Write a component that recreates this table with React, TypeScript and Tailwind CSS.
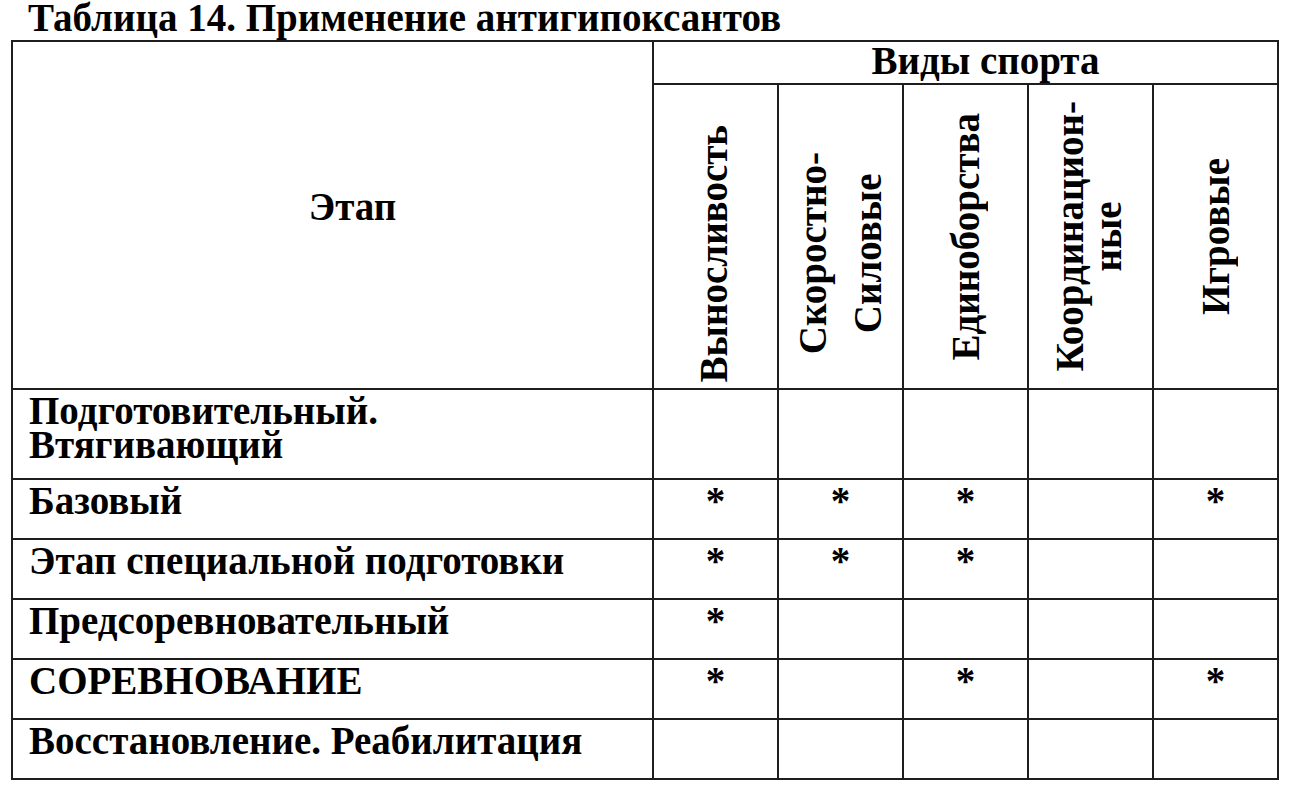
import React from "react";

const cols = ["a", "b", "c", "d", "e"];

const rows: { label: React.ReactNode; marks: boolean[]; h: string }[] = [
  { label: <>Подготовительный.<br />Втягивающий</>, marks: [false, false, false, false, false], h: "h-[90px]" },
  { label: "Базовый", marks: [true, true, true, false, true], h: "h-[60px]" },
  { label: "Этап специальной подготовки", marks: [true, true, true, false, false], h: "h-[60px]" },
  { label: "Предсоревновательный", marks: [true, false, false, false, false], h: "h-[60px]" },
  { label: "СОРЕВНОВАНИЕ", marks: [true, false, true, false, true], h: "h-[60px]" },
  { label: "Восстановление. Реабилитация", marks: [false, false, false, false, false], h: "h-[60px]" },
];

export default function App() {
  return (
    <div className="w-[1289px] h-[787px] bg-white text-black font-bold font-['Liberation_Serif','Times_New_Roman',serif] overflow-hidden">
      <h1 className="h-[40px] pl-[28px] text-[39px] leading-[36px] font-bold whitespace-nowrap">
        Таблица 14. Применение антигипоксантов
      </h1>
      <table className="ml-[11px] table-fixed border-collapse border-2 border-[#1e1e1e] w-[1266px]">
        <colgroup>
          <col className="w-[641px]" />
          {cols.map((c) => (
            <col key={c} className="w-[125px]" />
          ))}
        </colgroup>
        <tbody>
          <tr className="h-[43px]">
            <td rowSpan={2} className="border-2 border-[#1e1e1e] p-0 align-middle">
              <div className="flex h-[346px] items-center justify-center pl-[40px] pb-[18px] text-[39px] leading-[39px]">
                Этап
              </div>
            </td>
            <td colSpan={5} className="border-2 border-[#1e1e1e] p-0 align-middle">
              <div className="flex h-[41px] items-center justify-center pl-[40px] pb-[4px] text-[39px] leading-[39px] whitespace-nowrap">
                Виды спорта
              </div>
            </td>
          </tr>
          <tr className="h-[305px]">
            <td className="border-2 border-[#1e1e1e] p-0">
              <div className="flex h-[303px] items-center justify-center pt-[34px] pr-[4px] text-[39px] leading-[39px]">
                <span className="[writing-mode:vertical-rl] rotate-180 whitespace-nowrap">Выносливость</span>
              </div>
            </td>
            <td className="border-2 border-[#1e1e1e] p-0">
              <div className="flex h-[303px] items-center justify-center pt-[34px] pr-[2px] text-[39px] leading-[55px]">
                <span className="[writing-mode:vertical-rl] rotate-180 text-center whitespace-nowrap">Скоростно-<br />Силовые</span>
              </div>
            </td>
            <td className="border-2 border-[#1e1e1e] p-0">
              <div className="flex h-[303px] items-center justify-center text-[39px] leading-[39px]">
                <span className="[writing-mode:vertical-rl] rotate-180 whitespace-nowrap">Единоборства</span>
              </div>
            </td>
            <td className="border-2 border-[#1e1e1e] p-0">
              <div className="flex h-[303px] items-center justify-center pr-[3px] text-[39px] leading-[38px]">
                <span className="[writing-mode:vertical-rl] rotate-180 text-center whitespace-nowrap">Координацион-<br />ные</span>
              </div>
            </td>
            <td className="border-2 border-[#1e1e1e] p-0">
              <div className="flex h-[303px] items-center justify-center text-[39px] leading-[39px]">
                <span className="[writing-mode:vertical-rl] rotate-180 whitespace-nowrap">Игровые</span>
              </div>
            </td>
          </tr>
          {rows.map((r, i) => (
            <tr key={i} className={r.h}>
              <td className="border-2 border-[#1e1e1e] p-0 align-top">
                <div className="pl-[16px] pt-[4px] text-[39px] leading-[34px] whitespace-nowrap">{r.label}</div>
              </td>
              {r.marks.map((m, j) => (
                <td key={j} className="border-2 border-[#1e1e1e] p-0 align-top">
                  <div className="pt-[4px] text-center text-[39px] leading-[34px]">{m ? "*" : ""}</div>
                </td>
              ))}
            </tr>
          ))}
        </tbody>
      </table>
    </div>
  );
}
